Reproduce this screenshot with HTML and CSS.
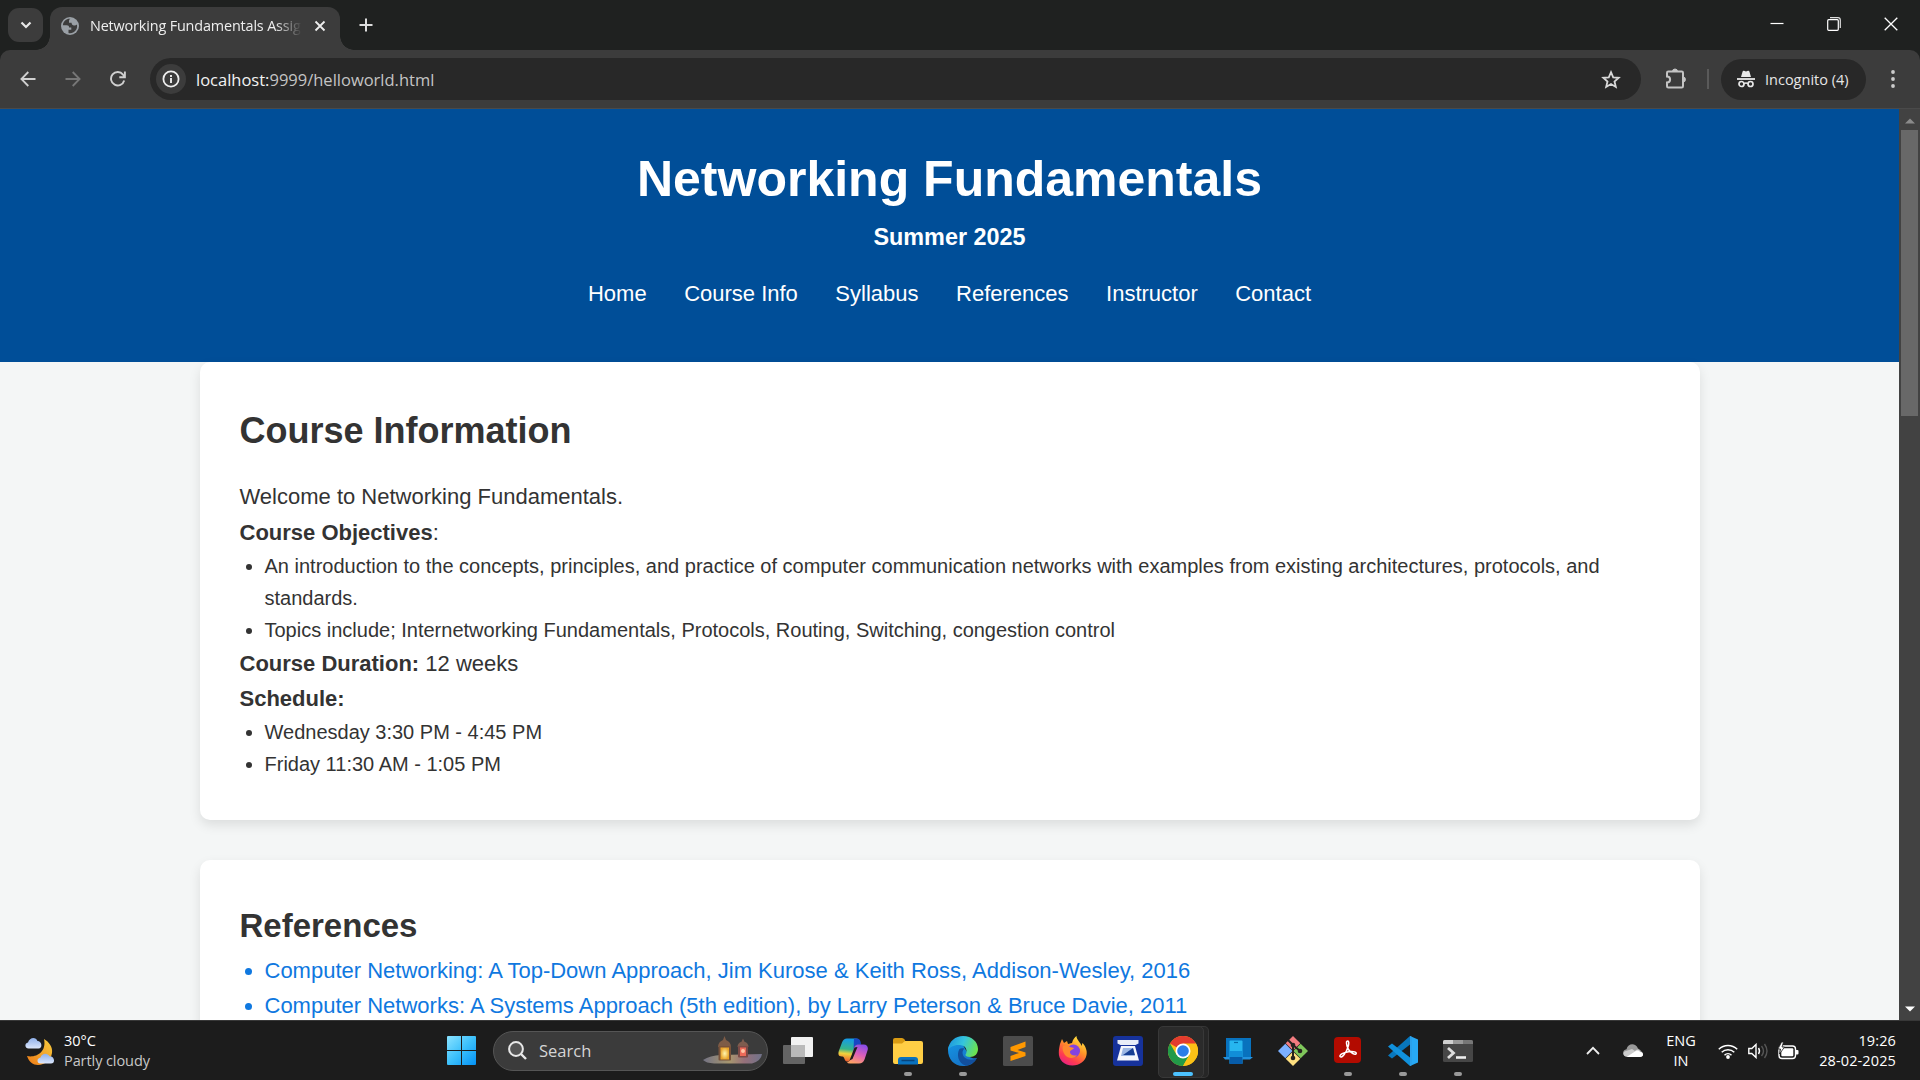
FILE: index.html
```html
<!DOCTYPE html>
<html lang="en">
<head>
<meta charset="utf-8">
<title>Networking Fundamentals</title>
<link rel="stylesheet" href="styles.css">
</head>
<body>
<div class="desktop">
  <div class="tabstrip">
    <div class="tab-search"><svg width="12" height="8" viewBox="0 0 12 8"><path d="M1.5 1.5 6 6l4.500-4.500" fill="none" stroke="#e8e8e8" stroke-width="2.200"/></svg></div>
    <div class="tab">
      <svg class="globe" width="18" height="18" viewBox="0 0 18 18"><circle cx="9" cy="9" r="9" fill="#9aa0a6"/><path d="M9.500 1.800C6 1.200 2.200 4 1.900 8.200h3.900c1.500 0 2.300.9 2.300 2.300h2.200v2.300H7.500v3.200c3 .7 6.200-.8 7.800-3.500.9-1.600 1-3.300.6-4.900-.9.9-2.400 1.100-3.800.6-1.400-.5-1.500-1.900-1.500-2.400H8V3.700c.1-1 .7-1.700 1.500-1.900z" fill="#3c3c3c"/></svg>
      <span class="tab-title">Networking Fundamentals Assig</span>
      <svg width="12" height="12" viewBox="0 0 12 12"><path d="M1.500 1.500l9 9M10.500 1.500l-9 9" stroke="#eee" stroke-width="1.800"/></svg>
    </div>
    <svg class="plus" width="14" height="14" viewBox="0 0 14 14"><path d="M7 .5v13M.5 7h13" stroke="#ddd" stroke-width="2"/></svg>
    <div class="window-buttons">
      <svg width="14" height="14" viewBox="0 0 14 14"><path d="M.5 6.500h13" stroke="#fff" stroke-width="1.200"/></svg>
      <svg width="14" height="14" viewBox="0 0 14 14"><rect x=".7" y="2.700" width="10.600" height="10.600" rx="1" fill="none" stroke="#fff" stroke-width="1.200"/><path d="M3 .7h8a2.300 2.300 0 0 1 2.300 2.300v8" fill="none" stroke="#ddd" stroke-width="1.200"/></svg>
      <svg width="14" height="14" viewBox="0 0 14 14"><path d="M.7.700l12.600 12.600M13.300.700.7 13.300" stroke="#fff" stroke-width="1.300"/></svg>
    </div>
  </div>

  <div class="toolbar">
    <svg class="nav-icon" width="16" height="16" viewBox="0 0 16 16"><path d="M15.500 8H2M8.300 1 1.400 8l6.900 7" fill="none" stroke="#d0d0d0" stroke-width="1.800"/></svg>
    <svg class="nav-icon" width="16" height="16" viewBox="0 0 16 16"><path d="M.5 8H14M7.700 1l6.900 7-6.900 7" fill="none" stroke="#777" stroke-width="1.800"/></svg>
    <svg class="nav-icon" width="16" height="16" viewBox="0 0 16 16"><path d="M14.200 9.500A6.700 6.700 0 1 1 13 3.600l1.700 2M14.900.5v5.700H9.300" fill="none" stroke="#d0d0d0" stroke-width="1.900"/></svg>
    <div class="omnibox">
      <span class="site-info"><svg width="18" height="18" viewBox="0 0 18 18"><circle cx="9" cy="9" r="7.600" fill="none" stroke="#eee" stroke-width="1.800"/><path d="M9 8v5M9 5v1.900" stroke="#eee" stroke-width="1.900"/></svg></span>
      <span class="url"><b>localhost:</b>9999/helloworld.html</span>
      <svg class="star" width="20" height="19" viewBox="0 0 20 19"><path d="M10 2.200l2.200 5.100 5.500.5-4.200 3.700 1.300 5.400-4.800-2.900-4.800 2.900 1.300-5.400-4.200-3.700 5.500-.5z" fill="none" stroke="#d8d8d8" stroke-width="1.800"/></svg>
    </div>
    <svg class="puzzle" width="22" height="22" viewBox="0 0 22 22"><path d="M2 4.800q0-1.300 1.300-1.300h13.400q1.300 0 1.300 1.300v13.400q0 1.300-1.300 1.300H3.300Q2 19.500 2 18.200v-3.600a3 3 0 0 0 0-6.200z" fill="none" stroke="#c4c4c4" stroke-width="2"/><path d="M7.500 3.500a2.500 2.500 0 0 1 5 0zM18 9a2.500 2.500 0 0 1 0 5z" fill="#c4c4c4" stroke="#c4c4c4"/></svg>
    <span class="divider"></span>
    <div class="incognito">
      <svg width="18" height="18" viewBox="0 0 18 18"><path d="M4 7 5.600 1.500q.4-1 1.400-.7l2 .6 2-.6q1-.3 1.400.7L14 7z" fill="#e8e8e8"/><path d="M0 9h18" stroke="#e8e8e8" stroke-width="1.800"/><circle cx="4.500" cy="14" r="2.500" fill="none" stroke="#e8e8e8" stroke-width="1.700"/><circle cx="13.500" cy="14" r="2.500" fill="none" stroke="#e8e8e8" stroke-width="1.700"/><path d="M7 13.500q2-1 4 0" fill="none" stroke="#e8e8e8" stroke-width="1.500"/></svg>
      <span>Incognito (4)</span>
    </div>
    <svg class="dots" width="4" height="18" viewBox="0 0 4 18"><g fill="#ccc"><circle cx="2" cy="2" r="1.900"/><circle cx="2" cy="9" r="1.900"/><circle cx="2" cy="16" r="1.900"/></g></svg>
  </div>

  <div class="viewport">
    <div class="page">
      <header class="site-header">
        <h1>Networking Fundamentals</h1>
        <h3>Summer 2025</h3>
        <nav><a>Home</a><a>Course Info</a><a>Syllabus</a><a>References</a><a>Instructor</a><a>Contact</a></nav>
      </header>
      <main>
        <section class="card">
          <h2 class="course-title">Course Information</h2>
          <p>Welcome to Networking Fundamentals.</p>
          <p><b>Course Objectives</b>:</p>
          <ul>
            <li>An introduction to the concepts, principles, and practice of computer communication networks with examples from existing architectures, protocols, and standards.</li>
            <li>Topics include; Internetworking Fundamentals, Protocols, Routing, Switching, congestion control</li>
          </ul>
          <p><b>Course Duration:</b> 12 weeks</p>
          <p><b>Schedule:</b></p>
          <ul>
            <li>Wednesday 3:30 PM - 4:45 PM</li>
            <li>Friday 11:30 AM - 1:05 PM</li>
          </ul>
        </section>
        <section class="card">
          <h2>References</h2>
          <ul class="links">
            <li>Computer Networking: A Top-Down Approach, Jim Kurose &amp; Keith Ross, Addison-Wesley, 2016</li>
            <li>Computer Networks: A Systems Approach (5th edition), by Larry Peterson &amp; Bruce Davie, 2011</li>
          </ul>
        </section>
      </main>
    </div>
    <div class="scrollbar">
      <svg width="10" height="6" viewBox="0 0 10 6"><path d="M0 5.500 5 .5l5 5z" fill="#8b8b8b"/></svg>
      <div class="thumb"></div>
      <svg class="down" width="10" height="6" viewBox="0 0 10 6"><path d="M0 .5l5 5 5-5z" fill="#fff"/></svg>
    </div>
  </div>

  <div class="taskbar">
    <div class="weather">
      <svg width="31" height="30" viewBox="0 0 31 30"><defs><linearGradient id="moon" x1="1" y1="0" x2="0" y2="1"><stop offset="0" stop-color="#f6cc3e"/><stop offset="1" stop-color="#ee7a16"/></linearGradient><linearGradient id="cloud" x1="0" y1="0" x2="0" y2="1"><stop offset="0" stop-color="#8fb0ea"/><stop offset="1" stop-color="#dbe6fb"/></linearGradient></defs><path d="M20 3c5 3 9 8 8 14-1 7-7 12-14 12-5 0-9-3-11-9 8 2 20-3 17-17z" fill="url(#moon)"/><path d="M4.500 12.500C1 12.500 0 7.500 4 6.500 5.500 1 12 .5 13.500 5c4.500 0 5.500 7.500 1 7.500z" fill="url(#cloud)"/><path d="M16.500 27.500c-4 0-4-5.500 0-6 1.500-4.500 7-5 9-1.200 5.500 0 6 7.200 1.500 7.200z" fill="url(#cloud)"/></svg>
      <div class="weather-text"><span>30°C</span><span class="dim">Partly cloudy</span></div>
    </div>
    <div class="start">
      <svg width="29" height="29" viewBox="0 0 29 29"><defs><linearGradient id="win" x1="0" y1="0" x2="1" y2="1"><stop offset="0" stop-color="#8be3ff"/><stop offset=".5" stop-color="#3cc0fb"/><stop offset="1" stop-color="#0391f5"/></linearGradient></defs><path d="M1 0h13v14H0V1q0-1 1-1zM15 0h13q1 0 1 1v13H15zM0 15h14v14H1q-1 0-1-1zM15 15h14v13q0 1-1 1H15z" fill="url(#win)"/></svg>
    </div>
    <div class="search">
      <svg width="19" height="19" viewBox="0 0 19 19"><circle cx="8" cy="8" r="6.900" fill="#555" stroke="#e8e8e8" stroke-width="2"/><path d="M13 13l5 5" stroke="#e8e8e8" stroke-width="2.400"/></svg>
      <span>Search</span>
      <svg class="lantern" width="60" height="30" viewBox="0 0 60 30"><defs><radialGradient id="lamp"><stop offset="0" stop-color="#fff6b0"/><stop offset="1" stop-color="#e9a52b"/></radialGradient><linearGradient id="mat"><stop offset="0" stop-color="#727284"/><stop offset=".45" stop-color="#a8976f"/><stop offset=".7" stop-color="#96707a"/><stop offset="1" stop-color="#70738a"/></linearGradient></defs><path d="M0 24q7-4.500 18-5l41-1q-1 7-10 9.500H11Q3 27 0 24z" fill="url(#mat)"/><path d="M15 11q0-5 5-7l1.500-4L23 4q5 2 5 7z" fill="#7e5c46"/><rect x="15.500" y="10" width="12.500" height="14.500" rx="1" fill="#78523a"/><rect x="17.500" y="11.500" width="8.500" height="12" fill="url(#lamp)"/><path d="M34.500 11q0-4 4-5.200L40 2.500l1.500 3.300q4 1.200 4 5.200z" fill="#7e5c4e"/><rect x="35" y="10" width="10" height="11.500" rx="1" fill="#7d4a46"/><rect x="37" y="11.500" width="6" height="8.500" fill="#ec6a58"/><circle cx="40" cy="15" r="2" fill="#ffc4a4"/></svg>
    </div>
    <div class="apps">
      <div class="app"><svg width="30" height="30" viewBox="0 0 30 30"><rect x="8" y="1" width="22" height="20" rx="1" fill="#f1f1f1"/><rect x="0" y="9" width="22" height="19" rx="1" fill="#777" fill-opacity=".8"/><rect x="8" y="9" width="14" height="12" fill="#b9b9b9"/></svg></div>
      <div class="app"><svg width="30" height="30" viewBox="0 0 30 30"><defs><linearGradient id="cpA" x1=".3" y1="0" x2=".2" y2="1"><stop offset="0" stop-color="#159be8"/><stop offset=".45" stop-color="#35b58b"/><stop offset=".65" stop-color="#f0d23c"/><stop offset="1" stop-color="#f2532e"/></linearGradient><linearGradient id="cpB" x1=".7" y1="0" x2=".3" y2="1"><stop offset="0" stop-color="#8a4de8"/><stop offset=".5" stop-color="#dd60b8"/><stop offset="1" stop-color="#ffa263"/></linearGradient></defs><path d="M9 2.500h9q3 0 4 3l.5 3h-2q-3 0-4 3l-2.500 9q-1.500 5-5 5c-2.500 0-2.500-5-4.500-5H4c-4 0-4-3-3-6l3-8q1.500-4 5-4z" fill="url(#cpA)"/><path d="M16 2.500h3q2.500 0 3.500 3l.5 3h-2.500q-3 0-4 3l-1 3z" fill="#1947c4"/><path d="M21 27.500h-9q-2.500 0-3-1.500 3 0 4.500-5l2.500-9q1-3.500 4.500-3.500h5c4 0 5 3 4 6l-3 9q-1.500 4-5.500 4z" fill="url(#cpB)"/><path d="M16.500 11.500 19.500 11 14.500 23l-3 1.500z" fill="#1c1c1c"/></svg></div>
      <div class="app open"><svg width="30" height="30" viewBox="0 0 30 30"><path d="M0 4q0-2 2-2h7q1.500 0 2.500 1.500L13 6v6H0z" fill="#d99b13"/><path d="M0 7.500h9l3-2.500h16q2 0 2 2v19q0 2-2 2H2q-2 0-2-2z" fill="#ffce45"/><path d="M5 28.500V24q0-3 3-3h14q3 0 3 3v4.500z" fill="#0a72bf"/><path d="M8.500 24.500h13" stroke="#08457c" stroke-width="1.500"/></svg></div>
      <div class="app open"><svg width="30" height="30" viewBox="0 0 30 30"><defs><linearGradient id="edA" x1="0" y1=".2" x2="1" y2=".5"><stop offset="0" stop-color="#1c94de"/><stop offset=".5" stop-color="#35c5dd"/><stop offset="1" stop-color="#6be34f"/></linearGradient><linearGradient id="edB" x1="0" y1="0" x2=".7" y2="1"><stop offset="0" stop-color="#1594e3"/><stop offset="1" stop-color="#1670c4"/></linearGradient></defs><path d="M0 14C0 6 8 6 15 9l4 7c0 5 5 7 10 6A15 15 0 0 1 15 30C6 30 0 23 0 14z" fill="url(#edB)"/><path d="M11.500 13c-3 5-2 14 6.500 16.700 5-.7 9-4 10.500-7.200-7 3-14 0-14-6 0-1.500 1-3 2-4-2-.5-4-.5-5 .5z" fill="#124f9d"/><path d="M0 14C1 5 7.500 0 15 0c9 0 15 6 15 13 0 5-3.500 8-8 8-3 0-5-1-4.500-2.500 2-2.500 1.500-9-5.500-9.500C6 8.500 2 11 0 14z" fill="url(#edA)"/></svg></div>
      <div class="app"><svg width="30" height="30" viewBox="0 0 30 30"><rect width="30" height="30" rx="1.500" fill="#4c4c4c"/><path d="M7.500 11 22.500 5.500v5.500l-8 3 8 2.500V20L7.500 25v-5l8.500-3-8.500-2.500z" fill="#ff9800"/></svg></div>
      <div class="app"><svg width="30" height="30" viewBox="0 0 30 30"><defs><linearGradient id="ff" x1=".8" y1="0" x2=".2" y2="1"><stop offset="0" stop-color="#fff044"/><stop offset=".4" stop-color="#ff9527"/><stop offset=".75" stop-color="#ff3b50"/><stop offset="1" stop-color="#e51d8b"/></linearGradient></defs><path d="M2 8 4 3l2 4 3-2 1 3 4-1c1-4 3-6 4.500-7 0 4 4 6 5 10l1-3c3 3 5 8 4 12-1 6-7 10.500-14 10.500C6 29.500.5 23.500.8 16.500c0-3.500.7-6 1.200-8.500z" fill="url(#ff)"/><circle cx="15.500" cy="15" r="6.500" fill="#8443e0"/><path d="M5 10c4-2 6 0 7 1l4 1c-1 2-4 2-4 4 0 3 4 4.500 7 3-2 4-9 4-12 0-2-3-3-6-2-9z" fill="#ff882e"/></svg></div>
      <div class="app"><svg width="30" height="30" viewBox="0 0 30 30"><rect width="30" height="30" rx="3" fill="#16329b"/><path d="M4.500 4h21v3.500L22.500 9h-15l-3-1.500z" fill="#e8edf8"/><path d="M8 10h14l4 14.500H4z" fill="#f4f6fc"/><path d="M10 12h10l2 8H8z" fill="#9cb7e4"/><path d="M10 19l10-7 2 7z" fill="#173f94"/></svg></div>
      <div class="app active"><svg width="30" height="30" viewBox="0 0 30 30"><circle cx="15" cy="15" r="15" fill="#fbc116"/><path d="M15 15 2 7.500a15 15 0 0 1 26 0z" fill="#e33b2e"/><path d="M2 7.500A15 15 0 0 0 15 30l6.500-11.300L8.500 18.700z" fill="#229a48"/><path d="M15 7.500h13A15 15 0 0 1 15 30l6.500-11.300z" fill="#fbc116"/><circle cx="15" cy="15" r="7.500" fill="#fff"/><circle cx="15" cy="15" r="5.800" fill="#2b7de9"/></svg></div>
      <div class="app"><svg width="30" height="30" viewBox="0 0 30 30"><path d="M3 2h25v19H3z" fill="#0872be"/><path d="M0 21h30l-3 2.500H2z" fill="#2292df"/><rect x="6.500" y="4.500" width="13" height="23.500" rx="1" fill="#27b6ef"/><path d="M6.500 15h13v6h-13z" fill="#118ed8"/><path d="M6.500 21h13v7h-13z" fill="#075ca9"/><path d="M11 6.500h4" stroke="#056ba8" stroke-width="1.200"/></svg></div>
      <div class="app"><svg width="30" height="30" viewBox="0 0 30 30"><path d="M15 0l7.300 7.300-7.300 7.300-7.300-7.300z" fill="#f27c80"/><path d="M7.300 7.700l7.300 7.300-7.300 7.300L0 15z" fill="#7bb0ff"/><path d="M22.700 7.700 30 15l-7.300 7.300-7.300-7.300z" fill="#7fc65b"/><path d="M15 15.400l7.300 7.300L15 30l-7.300-7.300z" fill="#ffe080"/><path d="M10 4l5 5v13M15 9l7 6" fill="none" stroke="#26221f" stroke-width="2"/><g fill="#26221f"><circle cx="15" cy="9" r="2.300"/><circle cx="22" cy="15" r="2.300"/><circle cx="15" cy="22" r="2.300"/></g></svg></div>
      <div class="app open"><svg width="30" height="30" viewBox="0 0 30 30"><rect x="1" y="1" width="27" height="26" rx="4" fill="#b30b00"/><path d="M7 20.500c-1-2 5-4.500 10-5s7 1.500 6 2.500c-2 1.500-8-3-9-8-1-4-.5-5 .7-5s1.500 2 .3 6c-1.500 5-6 12-8 9.500z" fill="none" stroke="#fff" stroke-width="1.500"/></svg></div>
      <div class="app open"><svg width="30" height="30" viewBox="0 0 30 30"><path d="M22 0 30 3.500v23L22 30z" fill="#27a8f4"/><path d="M22 0v8.500L4 22.500l-4-3z" fill="#0877bd"/><path d="M0 10.500l4-3 18 14V30z" fill="#1191dc"/><path d="M22 0l2 1v28l-2 1z" fill="#2aa0ea"/></svg></div>
      <div class="app open"><svg width="30" height="30" viewBox="0 0 30 30"><rect y="4" width="30" height="22" rx="1.500" fill="#464646"/><path d="M0 8V5.500Q0 4 1.500 4H10v4z" fill="#d0d0d0"/><path d="M10 4h10v4H10z" fill="#999"/><path d="M20 4h8.500Q30 4 30 5.500V8H20z" fill="#777"/><path d="M5 12l5.500 5L5 22" fill="none" stroke="#ddd" stroke-width="2.800"/><path d="M13 21.500h10" stroke="#eee" stroke-width="2.600"/></svg></div>
    </div>
    <div class="tray">
      <svg class="chev" width="14" height="9" viewBox="0 0 14 9"><path d="M1 8l6-6.200L13 8" fill="none" stroke="#eee" stroke-width="1.800"/></svg>
      <svg class="onedrive" width="20" height="13" viewBox="0 0 20 13"><path d="M4 12.500C-1 12-1 6 3.500 5.300 5-1 12.500-1.500 15 4.500l3 2-7 5z" fill="#9a9a9a"/><path d="M4 12.800C0 12.500-.5 9 1.500 7.500L9 5l3 2c1.500-2 4-2 5 0 4 1 4 5.500 0 5.800z" fill="#ccc"/><path d="M3.500 13 12 7.500c1.500-1.500 4-1.500 5 .5 4 .5 4 5 0 5z" fill="#fff"/></svg>
      <div class="lang"><span>ENG</span><span>IN</span></div>
      <svg class="wifi" width="20" height="16" viewBox="0 0 20 16"><g fill="none" stroke="#fff" stroke-width="1.500"><path d="M.8 6.200a13 13 0 0 1 18.400 0"/><path d="M3.700 9.200a9 9 0 0 1 12.600 0"/><path d="M6.500 12.200a5 5 0 0 1 7 0"/></g><circle cx="10" cy="14" r="1.900" fill="#fff"/></svg>
      <svg class="vol" width="20" height="16" viewBox="0 0 20 16"><g fill="none" stroke-width="1.400"><path d="M.8 5.500h3L8 1.500v13l-4.200-4h-3z" stroke="#fff"/><path d="M10.500 5q2 3 0 6" stroke="#fff"/><path d="M13.500 3q4 5 0 10M16.500 1q5 7 0 14" stroke="#555"/></g></svg>
      <svg class="batt" width="21" height="18" viewBox="0 0 21 18"><rect x="1" y="4" width="16.500" height="12.500" rx="3" fill="none" stroke="#fff" stroke-width="1.400"/><rect x="3.300" y="6.200" width="12" height="8" rx="1" fill="#fff"/><path d="M18 8h1.500q1 0 1 1v2.500q0 1-1 1H18z" fill="#fff"/><path d="M3.500 0 0 7h2.500L1.500 12 6.500 5H4L5.500 0z" fill="#fff" stroke="#1c1c1c" stroke-width=".8"/></svg>
      <div class="clock"><span>19:26</span><span>28-02-2025</span></div>
    </div>
  </div>
</div>
</body>
</html>
```
FILE: styles.css
```css
* { margin: 0; padding: 0; box-sizing: border-box; }
body { width: 1920px; height: 1080px; overflow: hidden; font-family: "Open Sans", "Noto Sans", sans-serif; }
svg { display: block; flex: none; }
.desktop { width: 1920px; height: 1080px; display: flex; flex-direction: column; background: #1f2120; }

/* browser tabs */
.tabstrip { height: 50px; flex: none; display: flex; align-items: flex-start; background: #1f2120; padding-left: 8px; }
.tab-search { width: 35px; height: 34px; margin-top: 8px; border-radius: 11px; background: #3c3c3c; display: flex; align-items: center; justify-content: center; }
.tab { position: relative; width: 290px; height: 43px; margin: 7px 0 0 7px; padding: 1px 16px 7px 11px; border-radius: 12px 12px 0 0; background: #3c3c3c; display: flex; align-items: center; }
.tab::before, .tab::after { content: ""; position: absolute; bottom: 0; width: 14px; height: 14px; }
.tab::before { left: -14px; background: radial-gradient(circle at 0 0, transparent 13.500px, #3c3c3c 14px); }
.tab::after { right: -14px; background: radial-gradient(circle at 100% 0, transparent 13.500px, #3c3c3c 14px); }
.tab-title { flex: none; width: 212px; margin: 0 12px 0 11px; overflow: hidden; white-space: nowrap; font-size: 14.400px; letter-spacing: -0.150px; color: #eee; -webkit-mask-image: linear-gradient(90deg, #000 185px, transparent 212px); mask-image: linear-gradient(90deg, #000 185px, transparent 212px); }
.plus { margin: 18px 0 0 19px; }
.window-buttons { margin: 17px 22px 0 auto; display: flex; gap: 43px; }

.toolbar { height: 58px; flex: none; display: flex; align-items: center; background: #3c3c3c; padding: 0 25px 0 20px; border-radius: 10px 10px 0 0; }
.nav-icon { margin-right: 29px; }
.omnibox { width: 1491px; height: 42px; margin-left: -5px; border-radius: 21px; background: #282828; display: flex; align-items: center; padding: 0 20px 0 6px; }
.site-info { width: 30px; height: 30px; border-radius: 50%; background: #3c3c3c; display: flex; align-items: center; justify-content: center; }
.url { margin-left: 10px; font-size: 16.500px; color: #c4c4c4; }
.url b { font-weight: 400; color: #f2f2f2; }
.star { margin-left: auto; }
.puzzle { margin-left: 24px; }
.divider { width: 2px; height: 20px; margin-left: 20px; background: #5a5a5a; }
.incognito { width: 145px; height: 41px; margin-left: 12px; border-radius: 21px; background: #282828; display: flex; align-items: center; gap: 10px; padding-left: 16px; font-size: 14.500px; color: #e6e6e6; white-space: nowrap; }
.dots { margin-left: auto; }

/* web page */
.viewport { height: 912px; flex: none; display: flex; border-top: 1px solid #4a4a4a; overflow: hidden; }
.page { flex: 1; min-width: 0; background: #f4f6f6; overflow: hidden; font-family: "Liberation Sans", Arial, sans-serif; line-height: 1.6; font-size: 22px; color: #333; }
.site-header { height: 252.800px; padding-top: 30px; background: #004e98; color: #fff; text-align: center; }
.site-header h1 { font-size: 50px; }
.site-header h3 { font-size: 23.400px; }
.site-header nav { display: flex; justify-content: center; gap: 37.500px; margin-top: 20px; }
main { width: 1500px; margin: 0 auto; }
.card { padding: 40px; margin-bottom: 40px; background: #fff; border-radius: 10px; box-shadow: 0 5px 12px rgba(0, 0, 0, .1); }
.card h2 { font-size: 33px; }
.card .course-title { font-size: 36px; margin-bottom: 20px; }
.card ul { padding-left: 25px; font-size: 20px; }
.card .links { font-size: 22px; color: #0f78e0; }

.scrollbar { width: 21px; flex: none; background: #424242; display: flex; flex-direction: column; align-items: center; padding: 9px 0 8px; }
.thumb { width: 17px; height: 286px; margin-top: 6px; background: #686868; }
.down { margin-top: auto; }

/* taskbar */
.taskbar { height: 60px; flex: none; display: flex; align-items: center; background: #1c1c1c; border-top: 1px solid #383838; color: #fff; font-size: 14.500px; line-height: 20px; }
.weather { width: 447px; display: flex; align-items: center; gap: 9px; padding-left: 24px; }
.weather-text { display: flex; flex-direction: column; }
.dim { color: #c8c8c8; letter-spacing: -0.080px; }
.search { width: 275px; height: 40px; margin-left: 17px; border: 1px solid #555; border-radius: 20px; background: #3b3b3b; display: flex; align-items: center; padding: 0 4px 0 14px; font-size: 16.500px; color: #d5d5d5; }
.search span { margin-left: 12px; }
.lantern { margin-left: auto; }
.apps { display: flex; margin-left: 2px; }
.app { position: relative; width: 55px; height: 50px; display: flex; align-items: center; justify-content: center; }
.app svg { position: relative; }
.app.open::after, .app.active::after { content: ""; position: absolute; bottom: 0; width: 8px; height: 4px; border-radius: 2px; background: #999; }
.app.active::after { width: 20px; background: #4cc2ff; }
.app.active::before { content: ""; position: absolute; left: 3px; top: 0; width: 44px; height: 50px; border: 1px solid #383838; border-radius: 5px; background: #2b2b2b; box-shadow: 5px 0 0 -1px #262626, 5px 0 0 0 #363636; }
.tray { margin-left: auto; padding-right: 24px; display: flex; align-items: center; }
.onedrive { margin-left: 23px; }
.lang { width: 34px; margin-left: 21px; display: flex; flex-direction: column; align-items: center; }
.wifi { margin-left: 20px; }
.vol { margin-left: 10px; }
.batt { margin-left: 10px; }
.clock { width: 77px; margin-left: 20px; display: flex; flex-direction: column; align-items: flex-end; white-space: nowrap; letter-spacing: 0.120px; }
```
